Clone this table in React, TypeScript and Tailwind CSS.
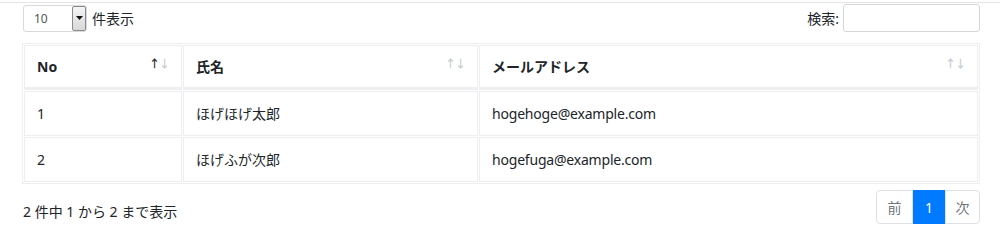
import React from 'react';

interface Person {
  no: number;
  name: string;
  email: string;
}

const rows: Person[] = [
  { no: 1, name: 'ほげほげ太郎', email: 'hogehoge@example.com' },
  { no: 2, name: 'ほげふが次郎', email: 'hogefuga@example.com' },
];

const font = { fontFamily: '"Noto Sans", "Noto Sans CJK JP", sans-serif' };

// ソートアイコン
const SortIcon: React.FC<{ active?: boolean }> = ({ active }) => (
  <span className="flex items-start text-[11px] leading-none tracking-[-1px]">
    <span className={active ? 'text-[#333]' : 'text-[#c8ccd0]'}>↑</span>
    <span className="text-[#c8ccd0]">↓</span>
  </span>
);

const App: React.FC = () => {
  return (
    <div className="w-[1000px] h-[250px] bg-white border-t border-[#e5e5e5] mt-[2px] text-[#212529]" style={font}>
      {/* 上部コントロール */}
      <div className="flex items-center justify-between pl-[23px] pr-[20px] pt-[1px]">
        <div className="flex items-center gap-[5px]">
          <div className="flex h-[27px] w-[64px] items-stretch rounded-[3px] border border-[#d7dadd] bg-white">
            <span className="flex-1 pl-[10px] text-[12px] leading-[25px] text-[#555]">10</span>
            <span className="flex w-[14px] items-center justify-center border border-[#8a8a8a] bg-gradient-to-b from-[#f4f4f4] to-[#d9d9d9] rounded-[2px]">
              <svg width="7" height="4" viewBox="0 0 7 4">
                <path d="M0 0h7L3.5 4z" fill="#111" />
              </svg>
            </span>
          </div>
          <span className="text-[14px]">件表示</span>
        </div>
        <div className="flex items-center gap-[4px]">
          <span className="text-[14px]">検索:</span>
          <div className="h-[28px] w-[137px] rounded-[3px] border border-[#d4d7da] bg-white" />
        </div>
      </div>

      {/* テーブル */}
      <div className="ml-[22px] mr-[20px] mt-[11px]">
        <table className="w-[958px] border-separate border-spacing-[1px] border border-[#eceef0] text-[14px]">
          <thead>
            <tr>
              <th className="w-[158px] border border-[#eceef0] border-b-[3px] px-[12px] h-[45px] text-left font-bold">
                <div className="flex items-center justify-between">
                  <span>No</span>
                  <span className="-mt-[6px]"><SortIcon active /></span>
                </div>
              </th>
              <th className="w-[295px] border border-[#eceef0] border-b-[3px] px-[12px] h-[45px] text-left font-bold">
                <div className="flex items-center justify-between">
                  <span>氏名</span>
                  <span className="-mt-[6px]"><SortIcon /></span>
                </div>
              </th>
              <th className="border border-[#eceef0] border-b-[3px] px-[12px] h-[45px] text-left font-bold">
                <div className="flex items-center justify-between">
                  <span>メールアドレス</span>
                  <span className="-mt-[6px]"><SortIcon /></span>
                </div>
              </th>
            </tr>
          </thead>
          <tbody>
            {rows.map((r) => (
              <tr key={r.no}>
                <td className="border border-[#eceef0] px-[12px] h-[45px]">{r.no}</td>
                <td className="border border-[#eceef0] px-[12px] h-[45px]">{r.name}</td>
                <td className="border border-[#eceef0] px-[12px] h-[45px] tracking-[-0.2px]">{r.email}</td>
              </tr>
            ))}
          </tbody>
        </table>
      </div>

      {/* 下部 */}
      <div className="flex items-start justify-between pl-[23px] pr-[20px] mt-[6px]">
        <span className="mt-[11px] text-[14px]">2 件中 1 から 2 まで表示</span>
        <div className="flex h-[34px] text-[14px]">
          <span className="flex w-[37px] items-center justify-center rounded-l-[4px] border border-[#dee2e6] text-[#6c757d]">前</span>
          <span className="flex w-[32px] items-center justify-center bg-[#007bff] text-white">1</span>
          <span className="flex w-[35px] items-center justify-center rounded-r-[4px] border border-[#dee2e6] text-[#6c757d]">次</span>
        </div>
      </div>
    </div>
  );
};

export default App;
